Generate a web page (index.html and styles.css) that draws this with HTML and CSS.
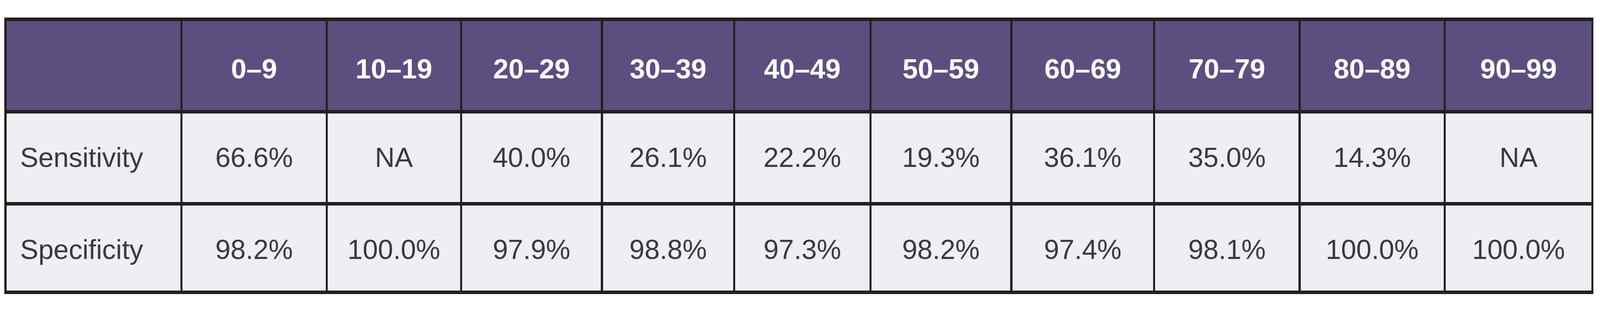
FILE: index.html
```html
<!DOCTYPE html>
<html lang="en">
<head>
<meta charset="utf-8">
<title>Sensitivity and specificity by age</title>
<link rel="stylesheet" href="styles.css">
</head>
<body>
<div class="table">
  <div class="cell head"></div>
  <div class="cell head">0–9</div>
  <div class="cell head">10–19</div>
  <div class="cell head">20–29</div>
  <div class="cell head">30–39</div>
  <div class="cell head">40–49</div>
  <div class="cell head">50–59</div>
  <div class="cell head">60–69</div>
  <div class="cell head">70–79</div>
  <div class="cell head">80–89</div>
  <div class="cell head">90–99</div>

  <div class="cell label r1">Sensitivity</div>
  <div class="cell r1">66.6%</div>
  <div class="cell r1">NA</div>
  <div class="cell r1">40.0%</div>
  <div class="cell r1">26.1%</div>
  <div class="cell r1">22.2%</div>
  <div class="cell r1">19.3%</div>
  <div class="cell r1">36.1%</div>
  <div class="cell r1">35.0%</div>
  <div class="cell r1">14.3%</div>
  <div class="cell r1">NA</div>

  <div class="cell label r2">Specificity</div>
  <div class="cell r2">98.2%</div>
  <div class="cell r2">100.0%</div>
  <div class="cell r2">97.9%</div>
  <div class="cell r2">98.8%</div>
  <div class="cell r2">97.3%</div>
  <div class="cell r2">98.2%</div>
  <div class="cell r2">97.4%</div>
  <div class="cell r2">98.1%</div>
  <div class="cell r2">100.0%</div>
  <div class="cell r2">100.0%</div>
</div>
</body>
</html>
```

FILE: styles.css
```css
/* Horizontal sizes are expressed as fractions of the 6609px-wide frame
   (1px of the reference = 100vw / 6609), vertical sizes in px. */
html, body {
  margin: 0;
  padding: 0;
  background: #ffffff;
}

body {
  padding: 45px 0 0 0.2724vw;
  font-family: "Liberation Sans", Arial, sans-serif;
}

.table {
  display: grid;
  box-sizing: border-box;
  width: 99.3191vw;
  grid-template-columns: 718fr 591fr 546fr 573fr 537fr 554fr 573fr 581fr 592fr 590fr 601fr;
  grid-template-rows: 228px 227px 218px;
  column-gap: 0.1362vw;
  row-gap: 9px;
  padding: 9px 0.1362vw;
  background: #231f20;
}

.cell {
  display: flex;
  align-items: center;
  justify-content: center;
  box-sizing: border-box;
  min-width: 0;
  background: #efeef5;
  color: #3a3a3c;
  font-size: 1.7098vw;
  line-height: 1;
  white-space: nowrap;
}

.head {
  background: #5c4f7f;
  color: #ffffff;
  font-weight: bold;
  font-size: 1.7249vw;
  padding-top: 18px;
}

.label {
  justify-content: flex-start;
  padding-left: 0.8473vw;
}

.r2 {
  padding-top: 9px;
}
```
